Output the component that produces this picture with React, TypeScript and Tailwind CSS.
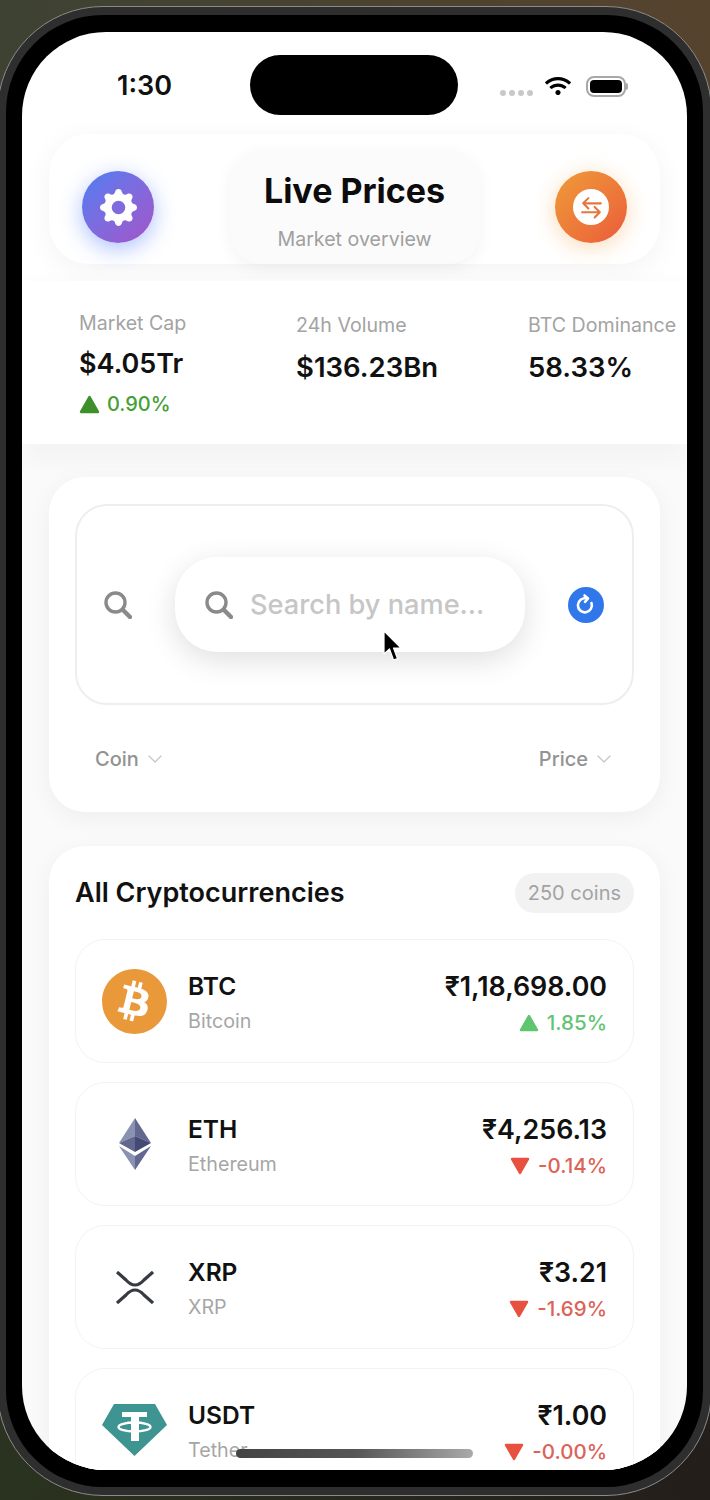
import React from "react";
import { ChevronDown } from "lucide-react";
import { BsGearFill } from "react-icons/bs";
import { FaBitcoin, FaWifi } from "react-icons/fa";

const SearchIcon = ({ className }: { className?: string }) => (
  <svg viewBox="0 0 28 28" className={className} fill="none" stroke="#8a8a8a">
    <circle cx="11.5" cy="11.5" r="9.5" strokeWidth="3.4" />
    <line x1="19" y1="19" x2="26" y2="26" strokeWidth="4.4" strokeLinecap="round" />
  </svg>
);

const Arrow = ({ down, color, className }: { down?: boolean; color: string; className?: string }) => (
  <svg viewBox="0 0 20 18" className={className}>
    <polygon
      points={down ? "2,2 18,2 10,16" : "10,2 18,16 2,16"}
      fill={color}
      stroke={color}
      strokeWidth="2.5"
      strokeLinejoin="round"
    />
  </svg>
);

const EthIcon = () => (
  <svg viewBox="0 0 32 52" className="w-[32px] h-[52px]">
    <polygon points="16,0 0,25 16,18" fill="#8a92b2" />
    <polygon points="16,0 32,25 16,18" fill="#62688f" />
    <polygon points="0,25 16,18 16,34" fill="#62688f" />
    <polygon points="32,25 16,18 16,34" fill="#454a75" />
    <polygon points="0,28 16,38 16,52" fill="#8a92b2" />
    <polygon points="32,28 16,38 16,52" fill="#62688f" />
  </svg>
);

const XrpIcon = () => (
  <svg viewBox="0 0 38 33" className="w-[38px] h-[33px]" fill="none" stroke="#363a42" strokeWidth="3.2">
    <path d="M1 1 L10 9 Q19 19 28 9 L37 1" />
    <path d="M1 32 L10 24 Q19 14 28 24 L37 32" />
  </svg>
);

const TetherIcon = () => (
  <svg viewBox="0 0 65 52" className="w-[65px] h-[52px]">
    <polygon points="12,0 53,0 65,21 32.5,52 0,21" fill="#3d9490" />
    <rect x="20" y="8" width="25" height="5" fill="#fff" />
    <rect x="29" y="13" width="8" height="24" fill="#fff" />
    <ellipse cx="32.5" cy="23" rx="16" ry="4.5" fill="none" stroke="#fff" strokeWidth="2.4" />
  </svg>
);

const coins = [
  { sym: "BTC", name: "Bitcoin", price: "₹1,18,698.00", change: "1.85%", up: true, icon: <FaBitcoin className="w-[67px] h-[67px] shrink-0 text-[#e9983a]" /> },
  { sym: "ETH", name: "Ethereum", price: "₹4,256.13", change: "-0.14%", up: false, icon: <EthIcon /> },
  { sym: "XRP", name: "XRP", price: "₹3.21", change: "-1.69%", up: false, icon: <XrpIcon /> },
  { sym: "USDT", name: "Tether", price: "₹1.00", change: "-0.00%", up: false, icon: <TetherIcon /> },
];

const CoinRow = ({ sym, name, price, change, up, icon }: (typeof coins)[number]) => (
  <div className="h-[124px] shrink-0 flex items-center px-[26px] rounded-[30px] border border-[#f3f3f3] bg-white">
    <div className="w-[65px] flex justify-center">{icon}</div>
    <div className="ml-[21px] pt-[3px] flex flex-col gap-[6px]">
      <span className="text-[24.5px] leading-[30px] font-semibold text-[#111]">{sym}</span>
      <span className="text-[19.7px] leading-[28px] text-[#a6a6a6]">{name}</span>
    </div>
    <div className="ml-auto pt-[6px] flex flex-col items-end gap-[8px]">
      <span className="text-[26.8px] leading-[30px] font-semibold text-[#111]">{price}</span>
      <div className="flex items-center gap-[8px]">
        <Arrow down={!up} color={up ? "#5fc56f" : "#e8503f"} className="w-[20px] h-[18px]" />
        <span className={`text-[20.5px] leading-[28px] font-medium ${up ? "text-[#62c472]" : "text-[#dd6258]"}`}>{change}</span>
      </div>
    </div>
  </div>
);

export default function App() {
  return (
    <div className="w-[710px] h-[1500px] overflow-hidden flex pt-[6px] bg-[conic-gradient(#4a4330_0deg,#56432e_25deg,#241e1b_155deg,#2a331f_205deg,#3e4232_335deg,#4a4330_360deg)] font-['Inter',sans-serif]">
      <div className="w-[715px] h-[1490px] -ml-[3px] shrink-0 rounded-[106px] border border-[#8b8b8b] bg-[#2e2e2e] p-[8px]">
        <div className="h-full rounded-[97px] bg-black px-[16px] py-[17px]">
          <div className="relative h-full rounded-[84px] overflow-hidden bg-[linear-gradient(#fff_0,#fff_400px,#fafafa_430px)]">
            {/* Dynamic island */}
            <div className="absolute left-[228px] top-[23px] w-[208px] h-[60px] rounded-full bg-black" />

            {/* Status bar */}
            <div className="h-[102px] flex items-start pl-[95px] pr-[59px] pt-[37px]">
              <span className="text-[27px] leading-[34px] font-semibold text-[#111]">1:30</span>
              <div className="ml-auto flex items-center h-[34px]">
                <div className="flex gap-[3px] mt-[14px]">
                  <span className="w-[6px] h-[6px] rounded-full bg-[#c8c8c8]" />
                  <span className="w-[6px] h-[6px] rounded-full bg-[#c8c8c8]" />
                  <span className="w-[6px] h-[6px] rounded-full bg-[#c8c8c8]" />
                  <span className="w-[6px] h-[6px] rounded-full bg-[#c8c8c8]" />
                </div>
                <FaWifi className="ml-[12px] w-[26px] h-[22px] text-black" />
                <div className="ml-[15px] flex items-center">
                  <div className="w-[40px] h-[21px] rounded-[8px] border-2 border-[#a8a8a8] p-[2px]">
                    <div className="w-full h-full rounded-[4px] bg-black" />
                  </div>
                  <div className="w-[2px] h-[7px] rounded-r-full bg-[#a8a8a8]" />
                </div>
              </div>
            </div>

            {/* Header */}
            <div className="mx-[27px] h-[130px] pt-[16px] px-[33px] flex items-center justify-between rounded-[40px] bg-white shadow-[0_6px_30px_rgba(0,0,0,0.05)]">
              <div className="w-[72px] h-[72px] rounded-full flex items-center justify-center bg-gradient-to-br from-[#4a7cf3] to-[#a153c8] shadow-[0_6px_22px_rgba(70,120,255,0.45)]">
                <BsGearFill className="w-[37px] h-[37px] text-white" />
              </div>
              <div className="w-[250px] h-[114px] flex flex-col items-center rounded-[32px] bg-[#fbfbfb] shadow-[0_4px_16px_rgba(0,0,0,0.05)]">
                <span className="mt-[20px] text-[34px] leading-[42px] font-bold text-[#0c0c0c]">Live Prices</span>
                <span className="mt-[14px] text-[19.6px] leading-[26px] text-[#a0a0a0]">Market overview</span>
              </div>
              <div className="w-[72px] h-[72px] rounded-full flex items-center justify-center bg-gradient-to-br from-[#ee9b38] to-[#ea5a3a] shadow-[0_4px_22px_rgba(245,160,70,0.4)]">
                <div className="w-[36px] h-[36px] rounded-full bg-white flex items-center justify-center">
                  <svg viewBox="0 0 24 24" className="w-[25px] h-[25px]" fill="none" stroke="#e4773e" strokeWidth="2" strokeLinecap="round" strokeLinejoin="round">
                    <path d="M21 8 H4 M9 3 L4 8 L9 13" />
                    <path d="M3 16.5 H20 M15 11.5 L20 16.5 L15 21.5" />
                  </svg>
                </div>
              </div>
            </div>

            {/* Market stats */}
            <div className="mt-[17px] h-[163px] bg-white flex pl-[57px] pt-[29px] overflow-hidden shadow-[0_10px_26px_rgba(0,0,0,0.05)]">
              <div className="w-[217px] shrink-0">
                <div className="text-[19.6px] leading-[26px] text-[#a3a3a3]">Market Cap</div>
                <div className="mt-[12px] text-[27px] leading-[32px] font-semibold text-[#111]">$4.05Tr</div>
                <div className="mt-[10px] flex items-center gap-[7px]">
                  <Arrow color="#3f8f2a" className="w-[21px] h-[19px]" />
                  <span className="text-[20px] leading-[28px] font-medium text-[#45a035]">0.90%</span>
                </div>
              </div>
              <div className="w-[232px] shrink-0 mt-[2px]">
                <div className="text-[19.6px] leading-[26px] text-[#a3a3a3]">24h Volume</div>
                <div className="mt-[13px] text-[27.5px] leading-[32px] font-semibold text-[#111]">$136.23Bn</div>
              </div>
              <div className="shrink-0 mt-[2px]">
                <div className="text-[19.6px] leading-[26px] text-[#a3a3a3]">BTC Dominance</div>
                <div className="mt-[13px] text-[27.5px] leading-[32px] font-semibold text-[#111]">58.33%</div>
              </div>
            </div>

            {/* Search and filters */}
            <div className="mt-[33px] mx-[27px] h-[335px] px-[26px] pt-[27px] rounded-[36px] bg-white shadow-[0_6px_24px_rgba(0,0,0,0.05)]">
              <div className="h-[201px] flex items-center justify-between pl-[27px] pr-[28px] rounded-[32px] border-2 border-[#eeeeee]">
                <SearchIcon className="w-[28px] h-[28px]" />
                <div className="w-[350px] h-[95px] flex items-center pl-[30px] rounded-[42px] bg-white shadow-[0_8px_30px_rgba(0,0,0,0.13)]">
                  <SearchIcon className="w-[28px] h-[28px]" />
                  <span className="ml-[17px] pt-[2px] text-[27.2px] font-medium text-[#c6c6c6]">Search by name...</span>
                </div>
                <div className="w-[36px] h-[36px] rounded-full bg-[#2f77ea] flex items-center justify-center">
                  <svg viewBox="0 0 24 24" className="w-[24px] h-[24px]" fill="none" stroke="#fff" strokeWidth="2.6" strokeLinecap="round" strokeLinejoin="round">
                    <path d="M17.5 10 A7 7 0 1 1 12.5 5.5" />
                    <path d="M10.5 2.5 L14 5.5 L11 8.8" />
                  </svg>
                </div>
              </div>
              <div className="mt-[41px] pl-[20px] pr-[18px] flex items-center justify-between">
                <div className="flex items-center gap-[4px]">
                  <span className="text-[20px] leading-[26px] font-medium text-[#939393]">Coin</span>
                  <ChevronDown className="w-[24px] h-[24px] text-[#c4c4c4]" strokeWidth={1.2} />
                </div>
                <div className="flex items-center gap-[4px]">
                  <span className="text-[20px] leading-[26px] font-medium text-[#939393]">Price</span>
                  <ChevronDown className="w-[24px] h-[24px] text-[#c4c4c4]" strokeWidth={1.2} />
                </div>
              </div>
            </div>

            {/* Coin list */}
            <div className="mt-[34px] mx-[27px] px-[26px] pt-[27px] rounded-t-[36px] bg-white shadow-[0_6px_24px_rgba(0,0,0,0.05)]">
              <div className="h-[40px] flex items-center justify-between">
                <span className="text-[27px] font-semibold text-[#111]">All Cryptocurrencies</span>
                <span className="h-[40px] px-[13px] flex items-center rounded-full bg-[#f2f2f2] text-[20px] text-[#a3a3a3]">250 coins</span>
              </div>
              <div className="mt-[26px] flex flex-col gap-[19px]">
                {coins.map((c) => (
                  <CoinRow key={c.sym} {...c} />
                ))}
              </div>
            </div>

            {/* Home indicator */}
            <div className="absolute left-[214px] bottom-[12px] w-[237px] h-[9px] rounded-full bg-gradient-to-r from-[#444] via-[#555] to-[#aaa]" />

            {/* Mouse cursor */}
            <svg viewBox="0 0 20 32" className="absolute left-[360px] top-[598px] w-[20px] h-[32px]">
              <path d="M2 1 L2 24 L7.5 19 L11.5 30 L15.5 28.5 L11.5 18 L19 18 Z" fill="#000" stroke="#fff" strokeWidth="1.2" strokeLinejoin="round" />
            </svg>
          </div>
        </div>
      </div>
    </div>
  );
}
